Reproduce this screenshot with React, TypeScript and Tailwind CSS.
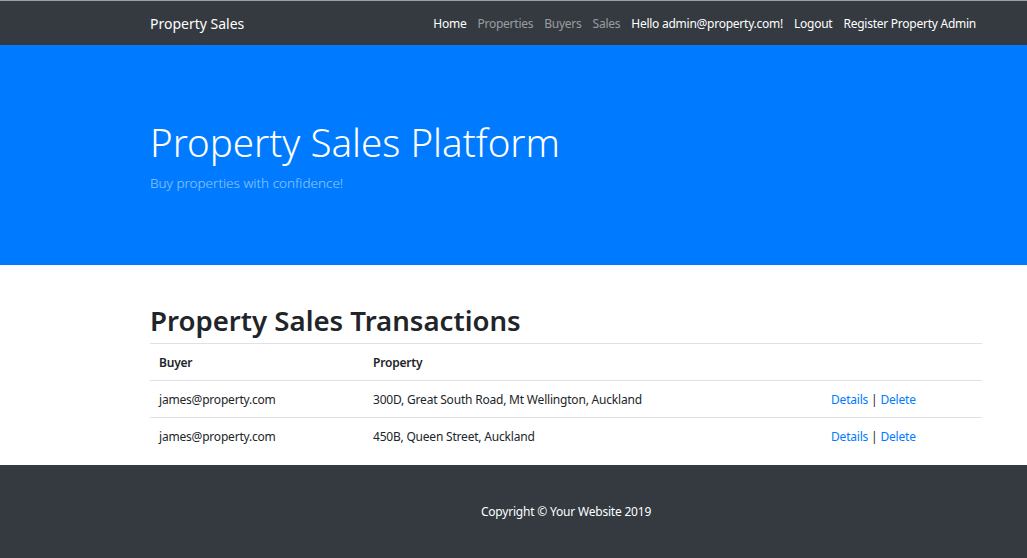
const font = { fontFamily: '"Segoe UI", "Noto Sans", sans-serif' };

const sales = [
  { buyer: "james@property.com", property: "300D, Great South Road, Mt Wellington, Auckland" },
  { buyer: "james@property.com", property: "450B, Queen Street, Auckland" },
];

function NavBar() {
  return (
    <nav className="h-[45px] border-t border-[#a0a0a0] bg-[#343a40]">
      <div className="ml-[150px] flex h-full w-[832px] items-center justify-between pt-[1px]">
        <a className="text-[14px] text-white">Property Sales</a>
        <div className="flex items-center gap-[11px] text-[12px] tracking-[-0.25px]">
          <a className="text-white">Home</a>
          <a className="text-white/50">Properties</a>
          <a className="text-white/50">Buyers</a>
          <a className="text-white/50">Sales</a>
          <span className="text-white">Hello admin@property.com!</span>
          <a className="text-white">Logout</a>
          <a className="mr-[6px] text-white">Register Property Admin</a>
        </div>
      </div>
    </nav>
  );
}

export default function App() {
  return (
    <div style={font} className="min-h-[558px] bg-white text-[#212529]">
      <NavBar />

      <section className="h-[220px] bg-[#007bff]">
        <div className="ml-[150px] w-[832px] pt-[72px]">
          <h1 className="text-[38.5px] leading-[50px] font-light text-white">Property Sales Platform</h1>
          <p className="mt-[6px] text-[13.5px] font-light text-white/55">Buy properties with confidence!</p>
        </div>
      </section>

      <main className="ml-[150px] w-[832px] pt-[36px]">
        <h2 className="pb-[4px] text-[27.6px] leading-[38px] font-semibold">Property Sales Transactions</h2>
        <table className="w-full text-[12px] tracking-[-0.2px]">
          <thead>
            <tr className="border-t border-[#dee2e6]">
              <th className="h-[37px] px-[9px] pt-[2px] text-left font-semibold">Buyer</th>
              <th className="h-[37px] px-[9px] pt-[2px] text-left font-semibold">Property</th>
              <th className="h-[37px] px-[9px]"></th>
            </tr>
          </thead>
          <tbody>
            {sales.map((s, i) => (
              <tr key={i} className="border-t border-[#dee2e6]">
                <td className="h-[37px] w-[214px] px-[9px] pt-[2px]">{s.buyer}</td>
                <td className="h-[37px] w-[458px] px-[9px] pt-[2px]">{s.property}</td>
                <td className="h-[37px] px-[9px] pt-[2px]">
                  <a className="text-[#007bff]">Details</a> | <a className="text-[#007bff]">Delete</a>
                </td>
              </tr>
            ))}
          </tbody>
        </table>
      </main>

      <footer className="mt-[10px] flex h-[93px] items-center bg-[#343a40] pt-[2px]">
        <p className="ml-[150px] w-[832px] text-center text-[12px] tracking-[-0.2px] text-white">
          Copyright © Your Website 2019
        </p>
      </footer>
    </div>
  );
}
